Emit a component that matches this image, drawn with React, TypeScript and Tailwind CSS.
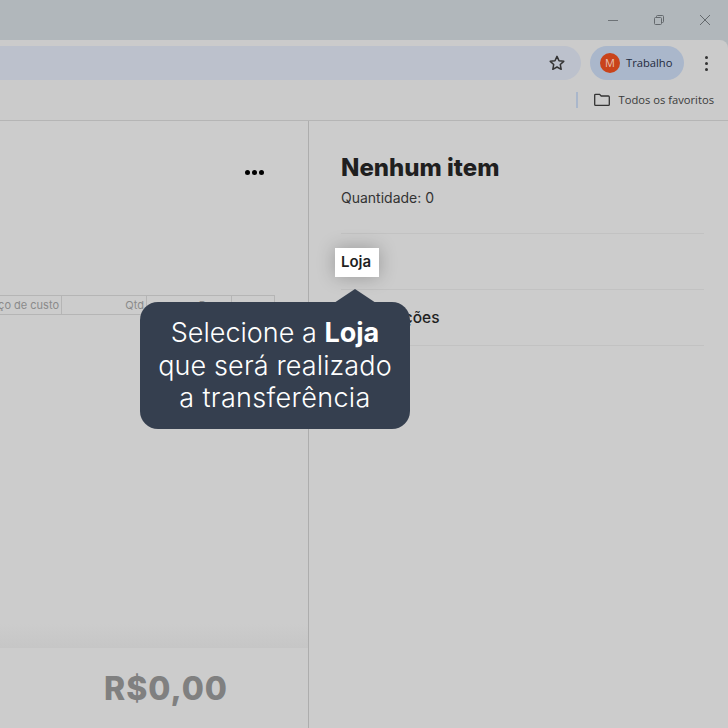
import React from "react";

function Chrome() {
  return (
    <header className="shrink-0 bg-[#b1b7bb] font-['Open_Sans',sans-serif]">
      {/* window buttons */}
      <div className="flex h-10 items-center justify-end text-[#5f6468]">
        <div className="flex w-[46px] justify-center">
          <div className="h-px w-[10px] bg-[#6d7276]" />
        </div>
        <div className="flex w-[46px] justify-center">
          <svg width="12" height="12" viewBox="0 0 12 12" fill="none" stroke="#64696d">
            <rect x="1.5" y="3.5" width="7" height="7" rx="1" />
            <path d="M3.5 3.5V2.5a1 1 0 0 1 1-1h5a1 1 0 0 1 1 1v5a1 1 0 0 1-1 1h-1" />
          </svg>
        </div>
        <div className="flex w-[46px] justify-center">
          <svg width="12" height="12" viewBox="0 0 12 12" fill="none" stroke="#64696d">
            <path d="M1 1l10 10M11 1L1 11" />
          </svg>
        </div>
      </div>
      {/* toolbar */}
      <div className="flex h-10 items-end rounded-tr-lg bg-[#cbcbcb]">
        <div className="flex h-[34px] flex-1 items-center justify-end rounded-r-full bg-[#bcc1cc] pr-[15px]">
          <svg width="18" height="18" viewBox="0 0 24 24" fill="none" stroke="#333" strokeWidth="2" strokeLinejoin="round">
            <path d="M12 3.2l2.7 5.8 6.3.8-4.6 4.3 1.2 6.3L12 17.3l-5.6 3.1 1.2-6.3L3 9.8l6.3-.8z" />
          </svg>
        </div>
        <div className="ml-[9px] flex h-[34px] w-[94px] items-center gap-[6px] rounded-full bg-[#aab7cb] pl-[10px]">
          <div className="flex h-5 w-5 items-center justify-center rounded-full bg-[#c9431a] text-[11px] text-[#e8c0b0]">M</div>
          <span className="text-[11.2px] text-[#1f2a40]">Trabalho</span>
        </div>
        <div className="flex h-[34px] w-[44px] flex-col items-center justify-center gap-[3px]">
          <div className="h-[3px] w-[3px] rounded-full bg-[#333]" />
          <div className="h-[3px] w-[3px] rounded-full bg-[#333]" />
          <div className="h-[3px] w-[3px] rounded-full bg-[#333]" />
        </div>
      </div>
      {/* bookmarks */}
      <div className="flex h-[41px] items-center justify-end border-b border-[#b5b5b5] bg-[#cbcbcb] pr-[14px]">
        <div className="mr-[15px] h-4 w-[2px] bg-[#aab7cb]" />
        <svg width="18" height="18" viewBox="0 0 18 18" fill="none" stroke="#333" strokeWidth="1.3" className="mr-[8px]">
          <path d="M1.7 4.2a.9.9 0 0 1 .9-.9h4l1.6 1.7h7.2a.9.9 0 0 1 .9.9v7.6a.9.9 0 0 1-.9.9H2.6a.9.9 0 0 1-.9-.9z" />
        </svg>
        <span className="text-[11.2px] text-[#3a3a3a]">Todos os favoritos</span>
      </div>
    </header>
  );
}

function LeftPanel() {
  return (
    <section className="flex w-[309px] shrink-0 flex-col border-r border-[#adadad]">
      <div className="flex flex-1 flex-col overflow-hidden">
        <div className="flex justify-end pr-[44px] pt-[49px]">
          <div className="flex gap-[2px]">
            <div className="h-[5px] w-[5px] rounded-full bg-black" />
            <div className="h-[5px] w-[5px] rounded-full bg-black" />
            <div className="h-[5px] w-[5px] rounded-full bg-black" />
          </div>
        </div>
        <div className="mt-[120px] flex justify-end pr-[33px]">
          <div className="flex h-5 shrink-0 border border-[#b5b5b5] text-right font-['Inter',sans-serif] text-[11px] leading-[18px] text-[#8a8a8a]">
            <div className="w-[62px] overflow-hidden whitespace-nowrap border-r border-[#b5b5b5] pr-[2px]">
              <span className="float-right">ço de custo</span>
            </div>
            <div className="w-[85px] border-r border-[#b5b5b5] pr-[2px]">Qtd</div>
            <div className="w-[85px] border-r border-[#b5b5b5] pr-[2px]">Preço</div>
            <div className="w-[42px]" />
          </div>
        </div>
      </div>
      <div className="h-6 shrink-0 bg-gradient-to-b from-[#cccccc] to-[#c6c6c6]" />
      <div className="flex h-20 shrink-0 items-center justify-end bg-[#cccccc] pr-[80px] pt-[2px] font-['Inter',sans-serif] text-[32px] font-extrabold tracking-[1px] text-[#808080]">
        R$0,00
      </div>
    </section>
  );
}

function RightPanel() {
  return (
    <section className="flex-1 pl-[32px] pr-[24px] pt-[32px] font-['Inter',sans-serif] text-[#1f1f1f]">
      <h1 className="text-[24px] font-extrabold leading-[30px]">Nenhum item</h1>
      <p className="mt-[5px] text-[14px] leading-5 text-[#333]">Quantidade: 0</p>
      <div className="mt-[25px] border-t border-[#c2c2c2]">
        <div className="flex h-[55px] items-center text-[15px] font-semibold">Loja</div>
      </div>
      <div className="border-t border-[#c2c2c2]">
        <div className="flex h-[55px] items-center text-[15.5px] font-medium">Observações</div>
      </div>
      <div className="border-t border-[#c2c2c2]" />
    </section>
  );
}

export default function App() {
  return (
    <div className="relative flex h-[728px] w-[728px] flex-col overflow-hidden bg-[#cccccc]">
      <Chrome />
      <main className="flex min-h-0 flex-1">
        <LeftPanel />
        <RightPanel />
      </main>

      {/* highlighted field of the tour step */}
      <div className="absolute left-[335px] top-[248px] flex h-[29px] w-[44px] items-center bg-white pl-[6px] font-['Inter',sans-serif] text-[15px] font-semibold text-[#1f1f1f] shadow-[0_0_18px_rgba(0,0,0,0.25)]">
        Loja
      </div>

      {/* tour tooltip */}
      <div className="absolute left-[140px] top-[302px] flex h-[127px] w-[270px] flex-col items-center justify-center rounded-[18px] bg-[#353f4f] pt-[1px] font-['Inter',sans-serif] text-[27px] font-light leading-[32.7px] text-white">
        <svg width="42" height="14" viewBox="0 0 42 14" className="absolute left-[194px] top-[-13px]" fill="#353f4f">
          <path d="M0 14L21 0l21 14z" />
        </svg>
        <p>
          Selecione a <b className="font-bold">Loja</b>
        </p>
        <p className="tracking-[0.12px]">que será realizado</p>
        <p className="tracking-[0.35px]">a transferência</p>
      </div>
    </div>
  );
}
